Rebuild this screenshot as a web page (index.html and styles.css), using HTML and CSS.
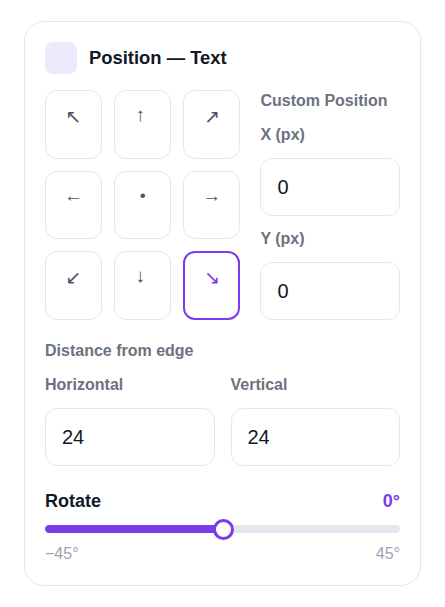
FILE: index.html
```html
<!DOCTYPE html>
<html lang="en">
<head>
<meta charset="utf-8">
<title>Position — Text</title>
<link rel="stylesheet" href="styles.css">
</head>
<body>
<div class="card">
  <div class="header">
    <div class="badge"></div>
    <div class="title">Position — Text</div>
  </div>

  <div class="top">
    <div class="anchors">
      <button class="anchor"><span class="glyph diag">↖&#xFE0E;</span></button>
      <button class="anchor"><span class="glyph straight rot">←&#xFE0E;</span></button>
      <button class="anchor"><span class="glyph diag">↗&#xFE0E;</span></button>
      <button class="anchor"><span class="glyph straight">←&#xFE0E;</span></button>
      <button class="anchor"><span class="glyph dot">•</span></button>
      <button class="anchor"><span class="glyph straight">→&#xFE0E;</span></button>
      <button class="anchor"><span class="glyph diag">↙&#xFE0E;</span></button>
      <button class="anchor"><span class="glyph straight rot">→&#xFE0E;</span></button>
      <button class="anchor selected"><span class="glyph diag">↘&#xFE0E;</span></button>
    </div>
    <div class="custom">
      <div class="section-label">Custom Position</div>
      <div class="field-label">X (px)</div>
      <div class="input">0</div>
      <div class="field-label">Y (px)</div>
      <div class="input">0</div>
    </div>
  </div>

  <div class="section-label distance">Distance from edge</div>
  <div class="pair">
    <div class="field">
      <div class="field-label">Horizontal</div>
      <div class="input">24</div>
    </div>
    <div class="field">
      <div class="field-label">Vertical</div>
      <div class="input">24</div>
    </div>
  </div>

  <div class="rotate-head">
    <span class="rotate-title">Rotate</span>
    <span class="rotate-value">0°</span>
  </div>
  <div class="slider">
    <div class="track">
      <div class="fill" style="width: 50%"></div>
    </div>
    <div class="thumb" style="left: 50%"></div>
  </div>
  <div class="range-labels">
    <span>−45°</span>
    <span>45°</span>
  </div>
</div>
</body>
</html>
```

FILE: styles.css
```css
* { box-sizing: border-box; }

html, body {
  margin: 0;
  background: #ffffff;
}

body {
  padding: 21px 24px;
  font-family: "Liberation Sans", Arial, "DejaVu Sans", sans-serif;
  color: #111827;
}

.card {
  border: 1px solid #e5e7eb;
  border-radius: 20px;
  padding: 20px;
  background: #ffffff;
}

.header {
  display: flex;
  align-items: center;
  gap: 12px;
  height: 32px;
  margin-bottom: 16px;
}

.badge {
  width: 32px;
  height: 32px;
  border-radius: 8px;
  background: #efe9fd;
}

.title {
  font-size: 18.4px;
  font-weight: 700;
  color: #111827;
}

.top {
  display: grid;
  grid-template-columns: 1.4fr 1fr;
  gap: 20px;
}

.anchors {
  display: grid;
  grid-template-columns: repeat(3, 1fr);
  grid-template-rows: repeat(3, 1fr);
  gap: 12px;
}

.anchor {
  display: flex;
  align-items: center;
  justify-content: center;
  padding: 0 0 17px 0;
  margin: 0;
  background: #ffffff;
  border: 1px solid #e5e7eb;
  border-radius: 12px;
  font-family: "Liberation Sans", "DejaVu Sans", sans-serif;
  font-size: 16px;
  color: #4b5563;
}

.anchor.selected {
  border: 2px solid #7c3aed;
  color: #7c3aed;
}

.glyph {
  display: inline-block;
  line-height: 18px;
}

.glyph.straight {
  font-size: 19px;
  color: #4b5563;
}

.glyph.rot {
  transform: rotate(90deg);
}

.glyph.diag {
  font-family: "DejaVu Sans", sans-serif;
  font-size: 19px;
}

.glyph.dot {
  font-size: 17px;
}

.custom {
  display: flex;
  flex-direction: column;
  gap: 12px;
}

.section-label {
  font-size: 16px;
  font-weight: 700;
  line-height: 22px;
  color: #6b7280;
}

.field-label {
  font-size: 16px;
  font-weight: 700;
  line-height: 22px;
  color: #6b7280;
}

.input {
  height: 58px;
  display: flex;
  align-items: center;
  padding: 0 16px;
  border: 1px solid #e5e7eb;
  border-radius: 12px;
  font-size: 20px;
  color: #111827;
  background: #ffffff;
}

.distance {
  margin-top: 20px;
  margin-bottom: 12px;
}

.pair {
  display: grid;
  grid-template-columns: 1fr 1fr;
  gap: 16px;
}

.field {
  display: flex;
  flex-direction: column;
  gap: 12px;
}

.rotate-head {
  display: flex;
  justify-content: space-between;
  align-items: center;
  margin-top: 23px;
  height: 24px;
}

.rotate-title {
  font-size: 18px;
  font-weight: 700;
  color: #111827;
}

.rotate-value {
  font-size: 18px;
  font-weight: 700;
  color: #7c3aed;
}

.slider {
  position: relative;
  height: 22px;
  margin-top: 5px;
  display: flex;
  align-items: center;
}

.track {
  width: 100%;
  height: 8px;
  border-radius: 4px;
  background: #e7e6ee;
  overflow: hidden;
}

.fill {
  height: 100%;
  background: #7c3aed;
  border-radius: 4px 0 0 4px;
}

.thumb {
  position: absolute;
  top: 1px;
  width: 21px;
  height: 21px;
  margin-left: -10px;
  border-radius: 50%;
  background: #ffffff;
  border: 3px solid #7c3aed;
}

.range-labels {
  display: flex;
  justify-content: space-between;
  margin-top: 3px;
  font-size: 16px;
  line-height: 22px;
  color: #9ca3af;
}
```
